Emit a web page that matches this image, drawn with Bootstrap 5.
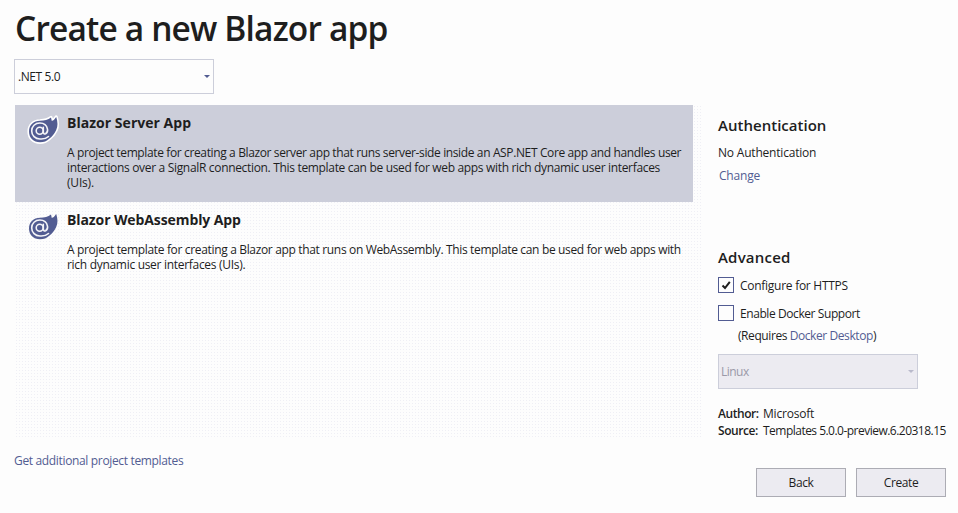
<!DOCTYPE html>
<html lang="en">
<head>
<meta charset="utf-8">
<meta name="viewport" content="width=device-width, initial-scale=1">
<title>Create a new Blazor app</title>
<link href="https://cdn.jsdelivr.net/npm/bootstrap@5.3.0/dist/css/bootstrap.min.css" rel="stylesheet">
<style>
body{font-family:"Open Sans","Noto Sans",sans-serif;font-size:12px;line-height:15px;color:#1e1e1e;background:#fdfdfd;letter-spacing:-.2px;width:958px;height:513px;overflow:hidden;white-space:nowrap}
a{color:#525c92;text-decoration:none}
.page-title{font-size:33.5px;line-height:46px;font-weight:600;letter-spacing:-.85px;padding:5px 0 0 15px;height:59px;margin:0}
.left-col{width:718px;padding-left:14px}
.right-col{width:240px;padding-top:56px}
.combo{width:200px;height:35px;border:1px solid #ccceda;background:#fdfdfd;padding:0 3px}
.combo.inactive{background:#ecebf1;color:#9a99a8;padding-left:2px}
.caret{width:0;height:0;border:3px solid transparent;border-top-color:#525c92;border-bottom:0}
.inactive .caret{border-top-color:#b9bacb}
.templates{width:687px;height:332px;margin:11px 0 0 1px;background-color:#fdfdfd;background-image:radial-gradient(circle at 1.5px 1.5px,#efeff5 .7px,transparent .8px);background-size:3px 3px}
.template{width:678px;height:97px;padding:9px 0 0 12px;gap:8px}
.template.selected{background:#ccceda}
.template h2{font-size:14px;line-height:18px;font-weight:700;letter-spacing:.03px;margin:0 0 13px}
.template h2.tight{letter-spacing:-.1px}
.template svg{width:32px;height:32px;flex:none;overflow:visible}
.ls-a{letter-spacing:-.372px}
.ls-b{letter-spacing:-.325px}
.ls-c{letter-spacing:-.34px}
.ls-d{letter-spacing:-.3px}
.ls-e{letter-spacing:-.42px}
.ls-f{letter-spacing:-.52px}
.section-title{font-size:15px;line-height:20px;font-weight:600;letter-spacing:.02px;margin:0}
.auth-name{margin-top:10px}
.auth-link{padding-left:1px}
.advanced{margin-top:64px}
.advanced .section-title{letter-spacing:.2px}
.option{gap:6px;margin-top:10px}
.option+.option{margin-top:12px}
.option .first{letter-spacing:-.27px}
.requires{margin:7px 0 11px 20px}
.source-info{margin-top:17px;gap:2px}
.actions{margin:30px 0 0 38px;gap:10px}
.box{width:16px;height:16px;border:1px solid #525c92;background:#fdfdfd}
.dlg-btn{width:90px;height:29px;border:1px solid #acacb4;border-radius:0;background:#ecebf1;color:#1e1e1e;font-size:12px;line-height:15px;padding:0;letter-spacing:-.4px}
.semi{font-weight:600;width:45px;letter-spacing:-.45px}
</style>
</head>
<body>
<svg class="d-none">
  <symbol id="flame" viewBox="0 0 32 32" overflow="visible">
    <path stroke-linejoin="round" d="M13 6.800C17.500 6.500 21 6 24 3.500L24.800 7Q27.500 6 29.200 3C30.800 8 31 12 29.200 16C27.400 20 25 22.500 22.500 24.500C19.500 27.200 17 28.300 13 28.300C6.500 28.300 2 24 2 17.500S6.500 7 13 6.800Z"/>
  </symbol>
  <symbol id="at" viewBox="0 0 32 32">
    <g fill="none" stroke="#f4f4f8" stroke-width="1.600" stroke-linecap="round"><circle cx="12.700" cy="16.800" r="3.500"/><path d="M16.300 13.300V18.300Q16.800 20.500 18.600 19.800C20.300 18.800 20.800 16.800 20.500 15.200C19.800 11.400 16.800 9 12.800 9C8.200 9 4.700 12.400 4.700 16.900S8.200 25 12.900 25Q18.300 25.500 21.500 22.500"/></g>
  </symbol>
</svg>
<h1 class="page-title">Create a new Blazor app</h1>
<main class="d-flex">
  <section class="left-col">
    <div class="combo d-flex align-items-center justify-content-between"><span class="ls-e">.NET 5.0</span><span class="caret"></span></div>
    <div class="templates">
      <article class="template selected d-flex">
        <svg viewBox="0 0 32 32"><use href="#flame" fill="#fff" stroke="#fff" stroke-width="3.200"/><use href="#flame" fill="#525c92"/><use href="#at"/></svg>
        <div><h2>Blazor Server App</h2><div><span class="ls-a">A project template for creating a Blazor server app that runs server-side inside an ASP.NET Core app and handles user</span><br><span class="ls-b">interactions over a SignalR connection. This template can be used for web apps with rich dynamic user interfaces</span><br>(UIs).</div></div>
      </article>
      <article class="template d-flex">
        <svg viewBox="0 0 32 32"><use href="#flame" fill="#525c92"/><use href="#at"/></svg>
        <div><h2 class="tight">Blazor WebAssembly App</h2><div><span class="ls-c">A project template for creating a Blazor app that runs on WebAssembly. This template can be used for web apps with</span><br><span class="ls-d">rich dynamic user interfaces (UIs).</span></div></div>
      </article>
    </div>
    <a href="#" class="d-inline-block mt-3 ls-c">Get additional project templates</a>
  </section>
  <aside class="right-col">
    <h2 class="section-title">Authentication</h2>
    <div class="auth-name">No Authentication</div>
    <a href="#" class="auth-link d-block mt-2">Change</a>
    <div class="advanced">
      <h2 class="section-title">Advanced</h2>
      <label class="option d-flex align-items-center"><span class="box"><svg class="d-block" width="14" height="14" viewBox="0 0 14 14"><path d="M3.500 7.500L6 10L10.800 3.800" fill="none" stroke="#1e1e1e" stroke-width="2"/></svg></span><span class="first">Configure for HTTPS</span></label>
      <label class="option d-flex align-items-center"><span class="box"></span><span class="ls-e">Enable Docker Support</span></label>
      <div class="requires ls-e">(Requires <a href="#">Docker Desktop</a>)</div>
      <div class="combo inactive d-flex align-items-center justify-content-between"><span class="ls-f">Linux</span><span class="caret"></span></div>
    </div>
    <div class="source-info d-flex flex-column">
      <div class="d-flex"><span class="semi">Author:</span><span>Microsoft</span></div>
      <div class="d-flex"><span class="semi">Source:</span><span class="ls-f">Templates 5.0.0-preview.6.20318.15</span></div>
    </div>
    <div class="actions d-flex"><button type="button" class="btn dlg-btn">Back</button><button type="button" class="btn dlg-btn">Create</button></div>
  </aside>
</main>
<script src="https://cdn.jsdelivr.net/npm/bootstrap@5.3.0/dist/js/bootstrap.bundle.min.js"></script>
</body>
</html>
